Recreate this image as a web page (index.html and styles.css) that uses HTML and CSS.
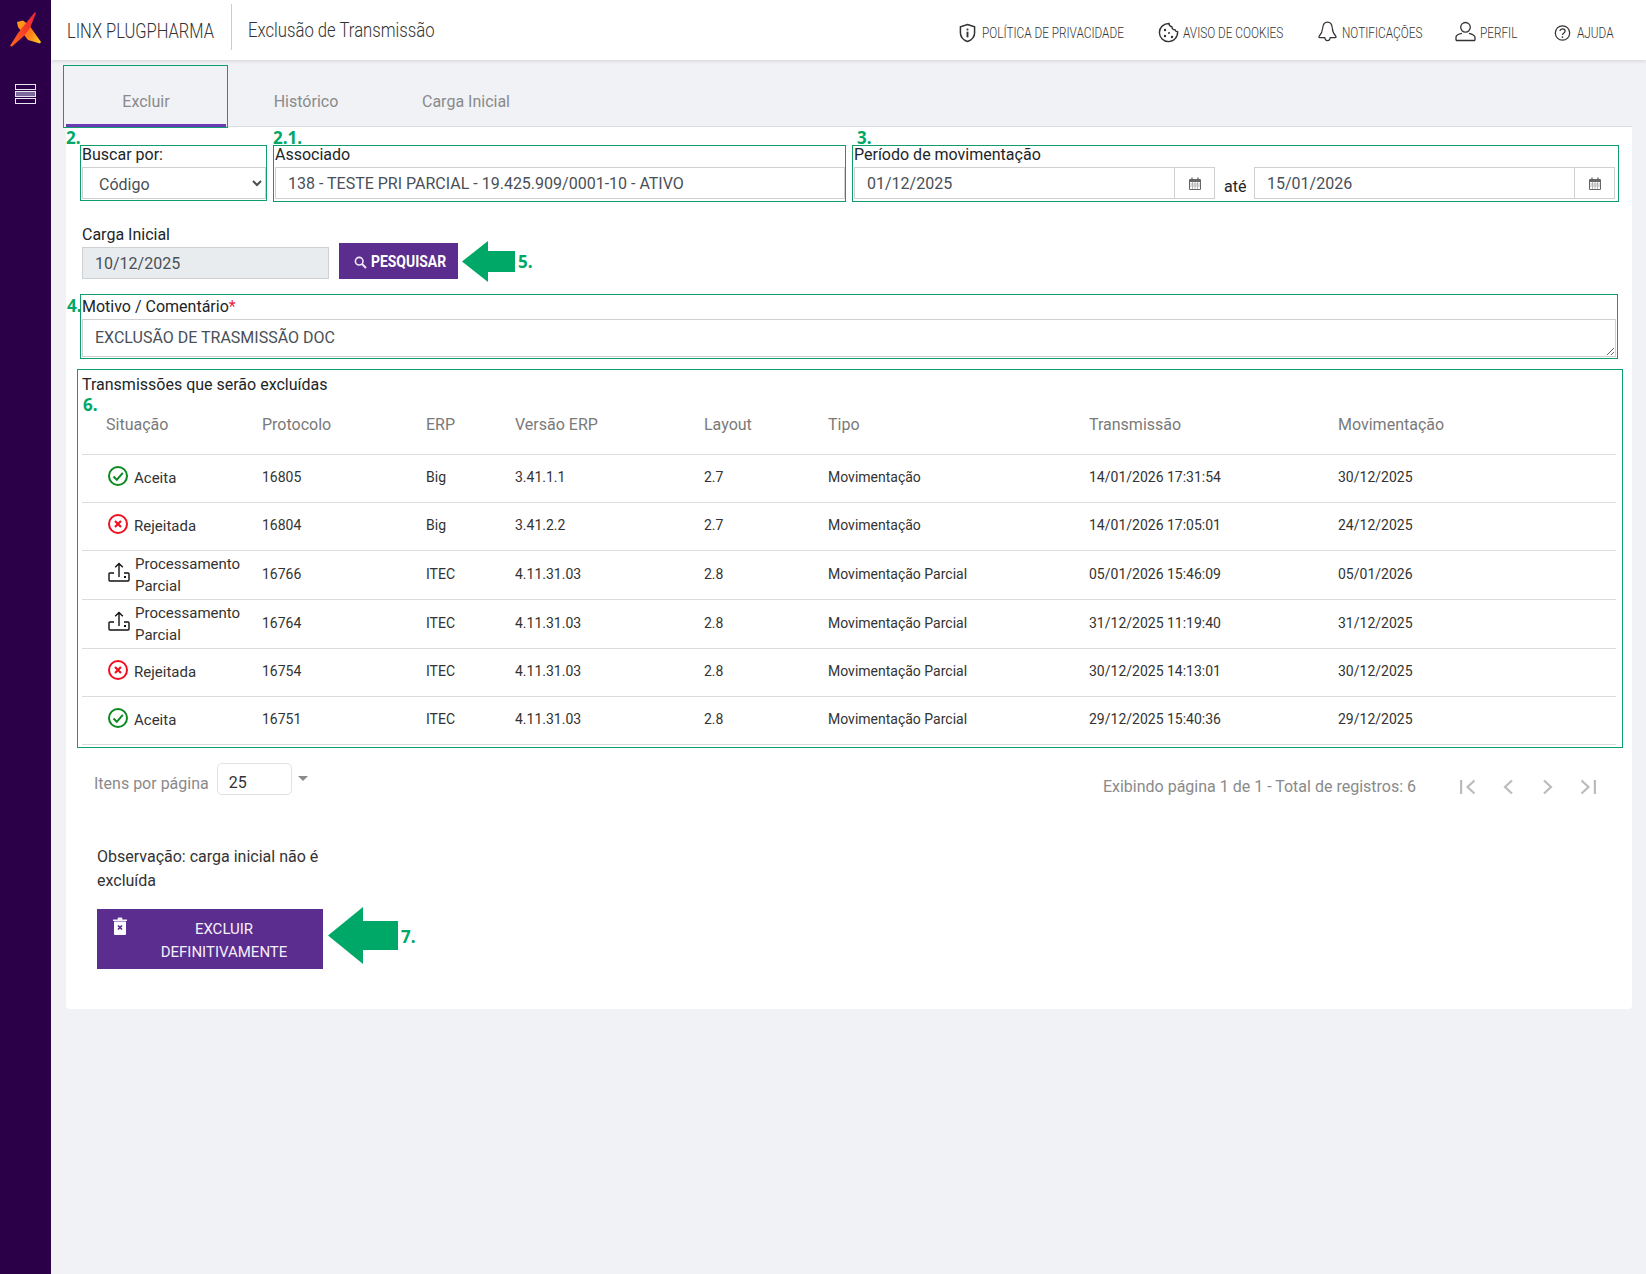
FILE: index.html
```html
<!DOCTYPE html>
<html lang="pt-BR">
<head>
<meta charset="utf-8">
<title>Exclusão de Transmissão</title>
<link rel="stylesheet" href="styles.css">
</head>
<body>
<div class="app">
  <aside class="sidebar">
    <svg class="logo" viewBox="0 0 32 36" aria-hidden="true">
      <defs>
        <linearGradient id="lg1" x1="0" y1="1" x2="1" y2="0"><stop offset="0" stop-color="#ff6a1c"/><stop offset="0.6" stop-color="#f3362a"/><stop offset="1" stop-color="#e8283c"/></linearGradient>
        <linearGradient id="lg2" x1="0" y1="0.3" x2="1" y2="0.8"><stop offset="0" stop-color="#ff9a1a"/><stop offset="0.5" stop-color="#ff7a1a"/><stop offset="1" stop-color="#ffc51f"/></linearGradient>
      </defs>
      <path d="M8 11 L14 9.5 L20 14 L32 31 L31 32.5 L19 29 L9 16 Z" fill="url(#lg2)"/>
      <path d="M26 1 L27 2 L21 17 L16 24 L3 35.5 L1 35 L9 22 Z" fill="url(#lg1)"/>
    </svg>
    <svg class="menu-icon" viewBox="0 0 21 20" aria-hidden="true">
      <rect x="0.5" y="0.5" width="20" height="5" fill="#2b0049" stroke="#e9e4f2"/>
      <rect x="0.5" y="7.5" width="20" height="5" fill="#7c6a9a" stroke="#e9e4f2"/>
      <rect x="0.5" y="14.5" width="20" height="5" fill="#2b0049" stroke="#e9e4f2"/>
    </svg>
  </aside>

  <div class="main">
    <header class="topbar">
      <div class="brand"><span class="brand-name">LINX PLUGPHARMA</span></div>
      <div class="page-title"><span>Exclusão de Transmissão</span></div>
      <nav class="topnav">
        <a class="nav-item nav-privacy">
          <svg class="nav-icon" viewBox="0 0 18 20" aria-hidden="true"><path d="M9 1 L16.5 3.5 V10 C16.5 14.5 13 17.5 9 19 C5 17.5 1.5 14.5 1.5 10 V3.5 Z" fill="none" stroke="#333" stroke-width="1.6"/><circle cx="9" cy="6.3" r="1.1" fill="#333"/><rect x="8" y="8.6" width="2" height="6" fill="#333"/></svg>
          <span class="nav-text">POLÍTICA DE PRIVACIDADE</span>
        </a>
        <a class="nav-item nav-cookie">
          <svg class="nav-icon nav-icon-wide" viewBox="0 0 21 21" aria-hidden="true"><path d="M11 1.5 C11 4 12.5 4.5 14 5 C14 7 15.5 8 17 7.8 C17.3 9 18.3 9.6 19.6 9.6 C20 15 15.8 19.6 10.5 19.6 C5.5 19.6 1.4 15.5 1.4 10.5 C1.4 5.5 5.5 1.5 11 1.5 Z" fill="none" stroke="#333" stroke-width="1.4"/><circle cx="7" cy="8" r="1.2" fill="#333"/><circle cx="11" cy="11" r="1" fill="#333"/><circle cx="7" cy="14" r="1.2" fill="#333"/><circle cx="14" cy="15" r="1.2" fill="#333"/></svg>
          <span class="nav-text">AVISO DE COOKIES</span>
        </a>
        <a class="nav-item nav-bell">
          <svg class="nav-icon nav-icon-wide nav-icon-up" viewBox="0 0 21 23" aria-hidden="true"><path d="M10.5 1.2 C14.5 1.2 15.6 4.5 15.8 8 C16 12 17.5 14.5 19.8 17 C20.2 17.6 19.8 18.2 19 18.2 H13.5 C13.2 20 12 21.5 10.5 21.5 C9 21.5 7.8 20 7.5 18.2 H2 C1.2 18.2 0.8 17.6 1.2 17 C3.5 14.5 5 12 5.2 8 C5.4 4.5 6.5 1.2 10.5 1.2 Z" fill="none" stroke="#333" stroke-width="1.3"/></svg>
          <span class="nav-text">NOTIFICAÇÕES</span>
        </a>
        <a class="nav-item nav-user">
          <svg class="nav-icon nav-icon-wide nav-icon-up" viewBox="0 0 21 20" aria-hidden="true"><circle cx="10.5" cy="5.8" r="4.8" fill="none" stroke="#333" stroke-width="1.3"/><path d="M1 19 V15.5 C1 13.5 4 12.4 7 11.8 M20 19 V16 C20 14 17 12.5 14 11.8 M1 19 H20" fill="none" stroke="#333" stroke-width="1.3"/></svg>
          <span class="nav-text">PERFIL</span>
        </a>
        <a class="nav-item nav-help">
          <svg class="nav-icon" viewBox="0 0 18 18" aria-hidden="true"><circle cx="9" cy="9" r="7.6" fill="none" stroke="#333" stroke-width="1.3"/><path d="M6.3 7 C6.3 3.8 11.8 3.8 11.8 7 C11.8 9 9 9 9 11.2" fill="none" stroke="#333" stroke-width="1.3"/><circle cx="9" cy="13.3" r="0.9" fill="#333"/></svg>
          <span class="nav-text">AJUDA</span>
        </a>
      </nav>
    </header>

    <div class="content">
      <div class="tabs">
        <div class="tab tab-active">Excluir</div>
        <div class="tab">Histórico</div>
        <div class="tab">Carga Inicial</div>
      </div>

      <section class="card">
        <div class="row row-search">
          <div class="field field-by">
            <div class="label">Buscar por:</div>
            <select class="control select"><option>Código</option></select>
          </div>
          <div class="field field-assoc">
            <div class="label">Associado</div>
            <div class="control">138 - TESTE PRI PARCIAL - 19.425.909/0001-10 - ATIVO</div>
          </div>
          <div class="field field-period">
            <div class="label">Período de movimentação</div>
            <div class="period">
              <div class="control date"><span class="date-value">01/12/2025</span><span class="date-addon"><svg class="cal" viewBox="0 0 12 13" aria-hidden="true"><path d="M0.5 2.5 H11.5 V12.5 H0.5 Z" fill="none" stroke="#666"/><path d="M1 2.5 H11 V5 H1 Z" fill="#666"/><path d="M3 0.5 V3 M9 0.5 V3" stroke="#666" stroke-width="1.3"/><path d="M1 7 H11 M1 9 H11 M3.5 5 V12 M6 5 V12 M8.5 5 V12" stroke="#aaa" stroke-width="0.8"/></svg></span></div>
              <span class="ate">até</span>
              <div class="control date"><span class="date-value">15/01/2026</span><span class="date-addon"><svg class="cal" viewBox="0 0 12 13" aria-hidden="true"><path d="M0.5 2.5 H11.5 V12.5 H0.5 Z" fill="none" stroke="#666"/><path d="M1 2.5 H11 V5 H1 Z" fill="#666"/><path d="M3 0.5 V3 M9 0.5 V3" stroke="#666" stroke-width="1.3"/><path d="M1 7 H11 M1 9 H11 M3.5 5 V12 M6 5 V12 M8.5 5 V12" stroke="#aaa" stroke-width="0.8"/></svg></span></div>
            </div>
          </div>
        </div>

        <div class="row row-load">
          <div class="field field-load">
            <div class="label label-tall">Carga Inicial</div>
            <div class="control control-disabled">10/12/2025</div>
          </div>
          <button class="btn-search" type="button">
            <svg class="search-icon" viewBox="0 0 13 13" aria-hidden="true"><circle cx="5.2" cy="5.2" r="3.8" fill="none" stroke="#efe9f6" stroke-width="1.6"/><path d="M8 8 L12 12" stroke="#efe9f6" stroke-width="2"/></svg>
            <span class="btn-search-text">PESQUISAR</span>
          </button>
        </div>

        <div class="motive">
          <div class="label label-tall">Motivo / Comentário<span class="req">*</span></div>
          <textarea class="control textarea" readonly>EXCLUSÃO DE TRASMISSÃO DOC</textarea>
        </div>

        <div class="table-title">Transmissões que serão excluídas</div>
        <table class="grid">
          <thead>
            <tr>
              <th class="c-sit">Situação</th><th class="c-pro">Protocolo</th><th class="c-erp">ERP</th><th class="c-ver">Versão ERP</th><th class="c-lay">Layout</th><th class="c-tip">Tipo</th><th class="c-tra">Transmissão</th><th class="c-mov">Movimentação</th>
            </tr>
          </thead>
          <tbody>
            <tr>
              <td class="c-sit"><div class="status"><svg class="st-icon" viewBox="0 0 20 20" aria-hidden="true"><circle cx="10" cy="10" r="9" fill="none" stroke="#0a8a1f" stroke-width="2"/><path d="M5.5 10.5 L8.8 13.8 L14.8 6.8" fill="none" stroke="#0a8a1f" stroke-width="2"/></svg><span>Aceita</span></div></td>
              <td>16805</td><td>Big</td><td>3.41.1.1</td><td>2.7</td><td>Movimentação</td><td>14/01/2026 17:31:54</td><td>30/12/2025</td>
            </tr>
            <tr>
              <td class="c-sit"><div class="status"><svg class="st-icon" viewBox="0 0 20 20" aria-hidden="true"><circle cx="10" cy="10" r="9" fill="none" stroke="#f0101f" stroke-width="2"/><path d="M7 7 L13 13 M13 7 L7 13" fill="none" stroke="#f0101f" stroke-width="2.2"/></svg><span>Rejeitada</span></div></td>
              <td>16804</td><td>Big</td><td>3.41.2.2</td><td>2.7</td><td>Movimentação</td><td>14/01/2026 17:05:01</td><td>24/12/2025</td>
            </tr>
            <tr>
              <td class="c-sit"><div class="status status-two"><svg class="up-icon" viewBox="0 0 22 20" aria-hidden="true"><path d="M6 11 H2 Q1 11 1 12 V18 Q1 19 2 19 H20 Q21 19 21 18 V12 Q21 11 20 11 H16" fill="none" stroke="#111" stroke-width="1.4"/><path d="M11 15 V1.5 M7.2 5.3 L11 1.5 L14.8 5.3" fill="none" stroke="#111" stroke-width="1.4"/><rect x="16" y="14" width="2" height="2" fill="#111"/></svg><span>Processamento Parcial</span></div></td>
              <td>16766</td><td>ITEC</td><td>4.11.31.03</td><td>2.8</td><td>Movimentação Parcial</td><td>05/01/2026 15:46:09</td><td>05/01/2026</td>
            </tr>
            <tr>
              <td class="c-sit"><div class="status status-two"><svg class="up-icon" viewBox="0 0 22 20" aria-hidden="true"><path d="M6 11 H2 Q1 11 1 12 V18 Q1 19 2 19 H20 Q21 19 21 18 V12 Q21 11 20 11 H16" fill="none" stroke="#111" stroke-width="1.4"/><path d="M11 15 V1.5 M7.2 5.3 L11 1.5 L14.8 5.3" fill="none" stroke="#111" stroke-width="1.4"/><rect x="16" y="14" width="2" height="2" fill="#111"/></svg><span>Processamento Parcial</span></div></td>
              <td>16764</td><td>ITEC</td><td>4.11.31.03</td><td>2.8</td><td>Movimentação Parcial</td><td>31/12/2025 11:19:40</td><td>31/12/2025</td>
            </tr>
            <tr>
              <td class="c-sit"><div class="status"><svg class="st-icon" viewBox="0 0 20 20" aria-hidden="true"><circle cx="10" cy="10" r="9" fill="none" stroke="#f0101f" stroke-width="2"/><path d="M7 7 L13 13 M13 7 L7 13" fill="none" stroke="#f0101f" stroke-width="2.2"/></svg><span>Rejeitada</span></div></td>
              <td>16754</td><td>ITEC</td><td>4.11.31.03</td><td>2.8</td><td>Movimentação Parcial</td><td>30/12/2025 14:13:01</td><td>30/12/2025</td>
            </tr>
            <tr>
              <td class="c-sit"><div class="status"><svg class="st-icon" viewBox="0 0 20 20" aria-hidden="true"><circle cx="10" cy="10" r="9" fill="none" stroke="#0a8a1f" stroke-width="2"/><path d="M5.5 10.5 L8.8 13.8 L14.8 6.8" fill="none" stroke="#0a8a1f" stroke-width="2"/></svg><span>Aceita</span></div></td>
              <td>16751</td><td>ITEC</td><td>4.11.31.03</td><td>2.8</td><td>Movimentação Parcial</td><td>29/12/2025 15:40:36</td><td>29/12/2025</td>
            </tr>
          </tbody>
        </table>

        <div class="pagination">
          <div class="page-size">
            <span class="page-size-label">Itens por página</span>
            <span class="page-size-box">25</span>
            <span class="caret"></span>
          </div>
          <div class="page-info">
            <span class="page-text">Exibindo página 1 de 1 - Total de registros: 6</span>
            <div class="pager">
              <svg class="pg" viewBox="0 0 16 16" aria-hidden="true"><path d="M1 1 V15" stroke="#bbb" stroke-width="2.4"/><path d="M14.5 1.5 L7.5 8 L14.5 14.5" fill="none" stroke="#bbb" stroke-width="2.2"/></svg>
              <svg class="pg" viewBox="0 0 16 16" aria-hidden="true"><path d="M12 1.5 L5 8 L12 14.5" fill="none" stroke="#bbb" stroke-width="2.2"/></svg>
              <svg class="pg" viewBox="0 0 16 16" aria-hidden="true"><path d="M4 1.5 L11 8 L4 14.5" fill="none" stroke="#bbb" stroke-width="2.2"/></svg>
              <svg class="pg" viewBox="0 0 16 16" aria-hidden="true"><path d="M15 1 V15" stroke="#bbb" stroke-width="2.4"/><path d="M1.5 1.5 L8.5 8 L1.5 14.5" fill="none" stroke="#bbb" stroke-width="2.2"/></svg>
            </div>
          </div>
        </div>

        <p class="note">Observação: carga inicial não é excluída</p>
        <button class="btn-delete" type="button">
          <svg class="trash" viewBox="0 0 14 18" aria-hidden="true"><path d="M0 2.5 H14 V4 H0 Z M4.5 2.5 L5 0.5 H9 L9.5 2.5 Z" fill="#f4f0fa"/><path d="M1 4.5 H13 V17 Q13 18 12 18 H2 Q1 18 1 17 Z" fill="#fdfcff"/><path d="M5 8.5 L9 12.5 M9 8.5 L5 12.5" stroke="#5b2d8e" stroke-width="1.7"/></svg>
          <span class="btn-delete-text">EXCLUIR DEFINITIVAMENTE</span>
        </button>
      </section>
    </div>
  </div>
</div>

<div class="mark box-tab"></div>
<div class="mark box-by"></div>
<div class="mark box-assoc"></div>
<div class="mark box-period"></div>
<div class="mark box-motive"></div>
<div class="mark box-table"></div>
<span class="tag tag-2">2.</span>
<span class="tag tag-21">2.1.</span>
<span class="tag tag-3">3.</span>
<span class="tag tag-4">4.</span>
<span class="tag tag-5">5.</span>
<span class="tag tag-6">6.</span>
<span class="tag tag-7">7.</span>
<svg class="arrow arrow-5" viewBox="0 0 53 41" aria-hidden="true"><path d="M0 20.5 L26 0 V10 H53 V31 H26 V41 Z" fill="#00a867"/></svg>
<svg class="arrow arrow-7" viewBox="0 0 70 57" aria-hidden="true"><path d="M0 28.5 L35 0 V14 H70 V43 H35 V57 Z" fill="#00a867"/></svg>
</body>
</html>
```
FILE: styles.css
```css
* { box-sizing: border-box; }
html, body { margin: 0; height: 100%; }
body {
  font-family: Roboto, "Liberation Sans", sans-serif;
  font-size: 16px;
  color: #212529;
  background: #f1f2f6;
  overflow: hidden;
  position: relative;
}
.app { display: flex; height: 1274px; }

/* sidebar */
.sidebar {
  width: 51px;
  flex: none;
  background: #2b0049;
  display: flex;
  flex-direction: column;
  align-items: center;
}
.logo { width: 32px; height: 36px; margin: 11px 0 0 -1px; display: block; }
.menu-icon { width: 21px; height: 20px; margin-top: 37px; display: block; }

/* header */
.main { flex: 1; min-width: 0; }
.topbar {
  height: 60px;
  background: #fff;
  box-shadow: 0 1px 4px rgba(0, 0, 0, .12);
  display: flex;
  align-items: center;
  position: relative;
}
.brand {
  width: 181px;
  height: 46px;
  margin-top: -6px;
  padding-left: 16px;
  border-right: 1px solid #ccc;
  display: flex;
  align-items: center;
}
.brand-name {
  display: inline-block;
  margin-top: 8px;
  font-size: 21px;
  font-weight: 300;
  color: #333;
  white-space: nowrap;
  transform: scaleX(.785);
  transform-origin: left center;
}
.page-title { padding-left: 16px; width: 300px; }
.page-title span {
  display: inline-block;
  font-size: 21px;
  font-weight: 300;
  color: #333;
  white-space: nowrap;
  transform: scaleX(.795);
  transform-origin: left center;
}
.topnav { margin-left: auto; display: flex; align-items: center; height: 60px; }
.nav-item { display: flex; align-items: center; position: relative; height: 60px; padding-top: 5px; }
.nav-icon { width: 17px; height: 20px; flex: none; }
.nav-icon-wide { width: 21px; height: 21px; }
.nav-icon-up { margin-top: -3px; }
.nav-text {
  display: inline-block;
  padding-top: 1px;
  font-size: 15px;
  font-weight: 300;
  color: #333;
  white-space: nowrap;
  transform: scaleX(.785);
  transform-origin: left center;
}
.nav-privacy { width: 199px; }
.nav-privacy .nav-text { margin-left: 6px; }
.nav-cookie { width: 159px; }
.nav-cookie .nav-text { margin-left: 4px; }
.nav-bell { width: 138px; }
.nav-bell .nav-text { margin-left: 4px; }
.nav-user { width: 99px; }
.nav-user .nav-text { margin-left: 4px; }
.nav-help { width: 92px; }
.nav-help .nav-text { margin-left: 6px; }

/* tabs */
.content { padding: 5px 14px 0 15px; }
.tabs { display: flex; height: 62px; border-bottom: 1px solid #dcdde1; }
.tab {
  width: 160px;
  height: 62px;
  padding-top: 26px;
  text-align: center;
  color: #8a8a8a;
  font-size: 16px;
  line-height: 22px;
}
.tab-active { border-bottom: 3px solid #6a3bb5; }

/* card */
.card {
  background: #fff;
  padding: 18px 16px 40px;
  border-radius: 0 0 4px 4px;
}
.row { display: flex; }
.row-search { gap: 9px; }
.field-by { width: 184px; flex: none; }
.field-assoc { width: 570px; flex: none; }
.field-period { flex: 1; }
.label { height: 22px; line-height: 20px; font-size: 16px; color: #212529; white-space: nowrap; }
.label-tall { height: 24px; line-height: 24px; }
.control {
  display: block;
  width: 100%;
  height: 32px;
  border: 1px solid #ced0d2;
  background: #fff;
  padding: 0 12px;
  font: 16px/32px Roboto, "Liberation Sans", sans-serif;
  color: #495057;
  white-space: nowrap;
}
.select { padding: 3px 4px 0 12px; }
.period { display: flex; }
.date { display: flex; padding: 0 0 0 12px; width: 361px; flex: none; }
.date-value { flex: 1; }
.date-addon {
  width: 40px;
  border-left: 1px solid #ced0d2;
  display: flex;
  align-items: center;
  justify-content: center;
}
.cal { width: 12px; height: 13px; }
.ate { width: 39px; padding: 8px 0 0 9px; line-height: 24px; color: #212529; }

.row-load { margin-top: 24px; align-items: flex-end; }
.field-load { width: 247px; flex: none; }
.control-disabled { background: #e9ecef; }
.btn-search {
  width: 119px;
  height: 36px;
  margin-left: 10px;
  border: 0;
  background: #5b2d8e;
  color: #fff;
  display: flex;
  align-items: center;
  padding: 0 0 0 15px;
  font-family: Roboto, "Liberation Sans", sans-serif;
}
.search-icon { width: 13px; height: 13px; margin-top: 3px; flex: none; }
.btn-search-text {
  display: inline-block;
  margin-left: 4px;
  font-size: 16px;
  font-weight: 700;
  white-space: nowrap;
  transform: scaleX(.87);
  transform-origin: left center;
}

.motive { margin-top: 16px; }
.req { color: #e8253c; }
.textarea { height: 38px; padding: 4px 12px; line-height: 28px; resize: vertical; overflow: hidden; }

.table-title { margin-top: 17px; height: 22px; line-height: 22px; }

/* table */
.grid { width: 100%; border-collapse: collapse; table-layout: fixed; }
.grid th {
  height: 58px;
  text-align: left;
  font-weight: 400;
  font-size: 16px;
  color: #7a7a7a;
  padding: 0;
  border-bottom: 1px solid #dcdcdc;
}
.grid td {
  height: 48px;
  padding: 1px 0 3px;
  font-size: 14px;
  color: #333;
  border-bottom: 1px solid #dcdcdc;
}
.c-sit { width: 180px; padding-left: 24px !important; }
.c-pro { width: 164px; }
.c-erp { width: 89px; }
.c-ver { width: 189px; }
.c-lay { width: 124px; }
.c-tip { width: 261px; }
.c-tra { width: 249px; }
.status { display: flex; align-items: center; margin: 2px 0 0 2px; }
.status span { margin-left: 6px; font-size: 15px; line-height: 22px; }
.st-icon { width: 20px; height: 20px; flex: none; margin-top: -4px; }
.status-two { margin: 0 0 0 2px; }
.status-two span { margin-left: 5px; width: 110px; transform: translateY(1px); }
.up-icon { width: 22px; height: 20px; flex: none; margin-top: -3px; }

/* pagination */
.pagination { display: flex; justify-content: space-between; margin-top: 18px; padding-left: 12px; }
.page-size { display: flex; align-items: flex-start; }
.page-size-label { color: #8a8a8a; line-height: 22px; margin-top: 10px; }
.page-size-box {
  width: 75px;
  height: 32px;
  margin-left: 8px;
  border: 1px solid #e2e2e2;
  border-radius: 5px;
  padding-left: 11px;
  line-height: 38px;
  color: #333;
}
.caret {
  width: 0;
  height: 0;
  margin: 13px 0 0 6px;
  border-left: 5px solid transparent;
  border-right: 5px solid transparent;
  border-top: 5px solid #8a8a8a;
}
.page-info { display: flex; align-items: flex-start; padding-top: 13px; }
.page-text { color: #8a8a8a; line-height: 22px; }
.pager { display: flex; gap: 24px; margin: 3px 20px 0 44px; }
.pg { width: 16px; height: 16px; display: block; }

/* note + delete */
.note { width: 240px; margin: 47px 0 0 15px; line-height: 24px; color: #333; }
.btn-delete {
  width: 226px;
  height: 60px;
  margin: 16px 0 0 15px;
  border: 0;
  background: #5b2d8e;
  color: #f4f0fa;
  display: flex;
  align-items: center;
  padding: 0;
  font: 15px/23px Roboto, "Liberation Sans", sans-serif;
  position: relative;
}
.trash { width: 14px; height: 18px; margin: -26px 0 0 16px; flex: none; }
.btn-delete-text { width: 150px; margin-left: 22px; padding-top: 4px; text-align: center; }

/* annotations drawn over the screenshot */
.mark { position: absolute; border: 1.5px solid #0f9d6c; pointer-events: none; }
.box-tab { left: 63px; top: 65px; width: 165px; height: 63px; }
.box-by { left: 80px; top: 145px; width: 187px; height: 56px; }
.box-assoc { left: 273px; top: 145px; width: 573px; height: 57px; }
.box-period { left: 852px; top: 145px; width: 767px; height: 57px; }
.box-motive { left: 80px; top: 294px; width: 1538px; height: 65px; }
.box-table { left: 77px; top: 369px; width: 1546px; height: 379px; }
.tag {
  position: absolute;
  font: 700 17px/14px "Noto Sans", "Open Sans", sans-serif;
  color: #00a867;
}
.tag-2 { left: 66px; top: 131px; }
.tag-21 { left: 273px; top: 131px; }
.tag-3 { left: 857px; top: 131px; }
.tag-4 { left: 67px; top: 299px; }
.tag-5 { left: 518px; top: 255px; }
.tag-6 { left: 83px; top: 398px; }
.tag-7 { left: 401px; top: 930px; }
.arrow { position: absolute; }
.arrow-5 { left: 462px; top: 241px; width: 53px; height: 41px; }
.arrow-7 { left: 328px; top: 907px; width: 70px; height: 57px; }
```
